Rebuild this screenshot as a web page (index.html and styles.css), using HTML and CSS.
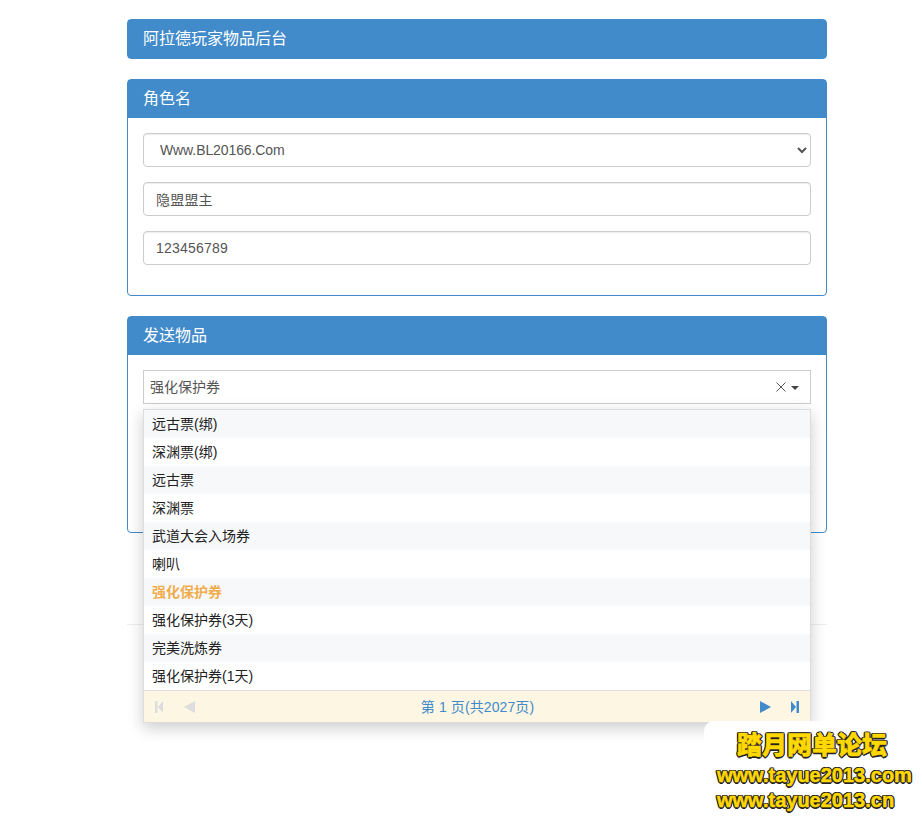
FILE: index.html
```html
<!DOCTYPE html>
<html lang="zh-CN">
<head>
<meta charset="utf-8">
<title>阿拉德玩家物品后台</title>
<link rel="stylesheet" href="styles.css">
</head>
<body>
<main class="page">
  <section class="panel panel-title">
    <h1 class="panel-heading">阿拉德玩家物品后台</h1>
  </section>

  <section class="panel">
    <h2 class="panel-heading">角色名</h2>
    <div class="panel-body">
      <div class="form-group">
        <select class="form-control form-select">
          <option>Www.BL20166.Com</option>
        </select>
      </div>
      <div class="form-group">
        <input class="form-control" type="text" value="隐盟盟主">
      </div>
      <div class="form-group">
        <input class="form-control" type="text" value="123456789">
      </div>
    </div>
  </section>

  <section class="panel">
    <h2 class="panel-heading">发送物品</h2>
    <div class="panel-body">
      <div class="form-group combo-wrap">
        <div class="combo">
          <span class="combo-text">强化保护券</span>
          <svg class="combo-clear" width="10" height="10" viewBox="0 0 10 10"><path d="M.5.5l9 9M9.500.5l-9 9" stroke="#555" fill="none"/></svg>
          <svg class="combo-caret" width="8" height="4" viewBox="0 0 8 4"><path d="M0 0h8L4 4z" fill="#444"/></svg>
        </div>
        <div class="dropdown">
          <ul class="dropdown-list">
            <li>远古票(绑)</li>
            <li>深渊票(绑)</li>
            <li>远古票</li>
            <li>深渊票</li>
            <li>武道大会入场券</li>
            <li>喇叭</li>
            <li class="selected">强化保护券</li>
            <li>强化保护券(3天)</li>
            <li>完美洗炼券</li>
            <li>强化保护券(1天)</li>
          </ul>
          <div class="pager">
            <div class="pager-group">
              <svg width="8" height="12" viewBox="0 0 8 12"><path d="M0 0h2.500v12H0zM8 0v12L3 6z" fill="#ddd"/></svg>
              <svg width="11" height="12" viewBox="0 0 11 12"><path d="M11 0v12L0 6z" fill="#ddd"/></svg>
            </div>
            <span class="pager-text">第 1 页(共2027页)</span>
            <div class="pager-group pager-group-next">
              <svg width="11" height="12" viewBox="0 0 11 12"><path d="M0 0v12L11 6z" fill="#428bca"/></svg>
              <svg width="8" height="12" viewBox="0 0 8 12"><path d="M0 0v12l5-6zM5.500 0H8v12H5.500z" fill="#428bca"/></svg>
            </div>
          </div>
        </div>
      </div>
      <div class="form-group"><input class="form-control" type="text"></div>
      <div class="form-group"><input class="form-control" type="text"></div>
    </div>
  </section>

  <hr class="rule">
</main>

<aside class="watermark">
  <div class="wm-title">踏月网单论坛</div>
  <div class="wm-url">www.tayue2013.com</div>
  <div class="wm-url">www.tayue2013.cn</div>
</aside>
</body>
</html>
```

FILE: styles.css
```css
* { box-sizing: border-box; }

html, body { margin: 0; height: 100%; }

body {
  position: relative;
  overflow: hidden;
  background: #fff;
  color: #333;
  font-family: "Liberation Sans", "Noto Sans CJK SC", sans-serif;
  font-size: 14px;
  line-height: 20px;
}

.page {
  width: 700px;
  margin-left: 127px;
  padding-top: 19px;
}

.panel {
  margin-bottom: 20px;
  background: #fff;
  border: 1px solid #428bca;
  border-radius: 4px;
}

.panel-heading {
  margin: 0;
  padding: 9px 15px 10px;
  background: #428bca;
  color: #fff;
  font-size: 16px;
  font-weight: 400;
  line-height: 19px;
}

.panel-body { padding: 15px; }

.form-group { margin-bottom: 15px; }

.form-control {
  display: block;
  width: 100%;
  height: 34px;
  padding: 6px 12px;
  background: #fff;
  color: #555;
  border: 1px solid #ccc;
  border-radius: 4px;
  box-shadow: inset 0 1px 1px rgba(0, 0, 0, .075);
  font: inherit;
  letter-spacing: .2px;
}

.form-select { letter-spacing: -.1px; }

.combo-wrap { position: relative; }

.combo {
  display: flex;
  align-items: center;
  height: 34px;
  padding: 0 11px 0 6px;
  border: 1px solid #ccc;
  color: #555;
}

.combo-text { flex: 1; }

.combo-clear { margin-right: 5px; }

.combo-caret { margin-top: 1px; }

.dropdown {
  position: absolute;
  top: 39px;
  left: 0;
  right: 0;
  z-index: 10;
  background: #fff;
  border: 1px solid #ddd;
  box-shadow: 0 5px 15px rgba(0, 0, 0, .2);
}

.dropdown-list {
  margin: 0;
  padding: 0;
  list-style: none;
}

.dropdown-list li {
  height: 28px;
  padding: 4px 8px;
  color: #222;
}

.dropdown-list li:nth-child(odd) { background: #f7f8fa; }

.dropdown-list li.selected {
  color: #f0ad4e;
  font-weight: 700;
}

.pager {
  display: flex;
  align-items: center;
  justify-content: space-between;
  height: 32px;
  padding: 0 11px;
  background: #fcf6e3;
  border-top: 1px solid #ddd;
  color: #428bca;
}

.pager-text { letter-spacing: .1px; }

.pager-group {
  display: flex;
  align-items: center;
  gap: 21px;
}

.pager-group-next { gap: 20px; }

.rule {
  margin: 91px 0 0;
  border: 0;
  border-top: 1px solid #eee;
}

.watermark {
  position: absolute;
  right: 0;
  bottom: 0;
  z-index: 20;
  width: 218px;
  height: 97px;
  padding-top: 9px;
  background: #fff;
  border-top-left-radius: 10px;
  color: #ffd800;
  font-weight: 900;
  -webkit-text-stroke: .5px #ffd800;
  text-shadow:
    1.5px 0 0 #222, -1.5px 0 0 #222, 0 1.5px 0 #222, 0 -1.5px 0 #222,
    1px 1px 0 #222, -1px 1px 0 #222, 1px -1px 0 #222, -1px -1px 0 #222;
}

.wm-title {
  margin-bottom: 3px;
  padding-left: 33px;
  font-size: 25px;
  line-height: 30px;
}

.wm-url {
  padding-left: 13px;
  font-size: 20px;
  line-height: 25px;
}
```
